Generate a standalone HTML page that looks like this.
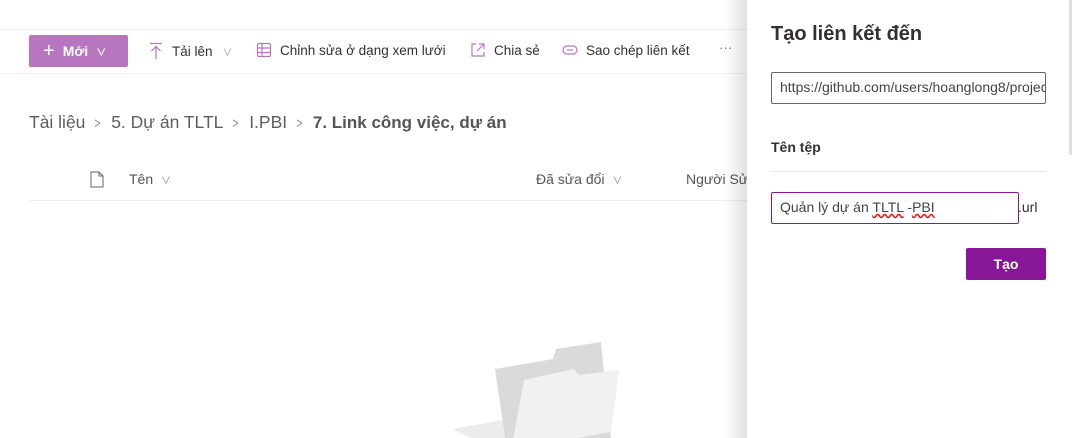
<!DOCTYPE html>
<html><head><meta charset="utf-8"><style>
*{margin:0;padding:0;box-sizing:border-box}
body{width:1075px;height:438px;overflow:hidden;background:#fff;font-family:"Segoe UI","Liberation Sans","Noto Sans CJK SC",sans-serif;color:#323130;position:relative}
.abs{position:absolute}
.tb{font-size:13.5px;color:#323130;display:flex;align-items:center;white-space:nowrap}
.ch{display:inline-block;margin:0 9px 0 8px;font-size:15px;color:#888;transform:scaleX(0.7)}
</style></head><body>
<div class="abs" style="left:0;top:29px;width:750px;height:1px;background:#eee"></div>
<div class="abs" style="left:0;top:73px;width:750px;height:1px;background:#f0f0f0"></div>
<div class="abs" style="left:29px;top:35px;width:99px;height:32px;background:#b876c1;border-radius:2px;color:#fff;font-weight:bold;font-size:14px;display:flex;align-items:center;padding-left:14px"><span style="font-size:20px;font-weight:normal;margin-right:8px;line-height:1">+</span>Mới<span style="margin-left:8px;font-size:10px">&#x2228;</span></div>
<div class="abs tb" style="left:148px;top:42px">
<svg width="16" height="18" viewBox="0 0 16 18"><path d="M2 1.5h12M8 4v13M3.5 9L8 4.5 12.5 9" fill="none" stroke="#b876c1" stroke-width="1.2"/></svg>
<span style="margin-left:8px">Tải lên</span><span style="margin-left:10px;color:#999;font-size:10px">&#x2228;</span></div>
<div class="abs tb" style="left:256px;top:42px">
<svg width="16" height="16" viewBox="0 0 16 16"><rect x="1.5" y="1.5" width="13" height="13" rx="1.5" fill="none" stroke="#b876c1" stroke-width="1.2"/><path d="M1.5 6h13M1.5 10.5h13M6 1.5v13" stroke="#b876c1" stroke-width="1.2"/></svg>
<span style="margin-left:8px">Chỉnh sửa ở dạng xem lưới</span></div>
<div class="abs tb" style="left:470px;top:42px">
<svg width="16" height="16" viewBox="0 0 16 16"><path d="M6 2H2v12h12v-4M9 2h5v5M14 2L7 9" fill="none" stroke="#b876c1" stroke-width="1.2"/></svg>
<span style="margin-left:8px">Chia sẻ</span></div>
<div class="abs tb" style="left:562px;top:42px">
<svg width="16" height="16" viewBox="0 0 16 16"><rect x="1" y="4" width="14" height="8" rx="4" fill="none" stroke="#b876c1" stroke-width="1.2"/><path d="M5 8h6" stroke="#b876c1" stroke-width="1.2"/></svg>
<span style="margin-left:8px">Sao chép liên kết</span></div>
<div class="abs tb" style="left:719px;top:40px;color:#777">···</div>
<div class="abs" style="left:29px;top:112px;font-size:17.5px;color:#605e5c;white-space:nowrap">Tài liệu<span class="ch">&gt;</span>5. Dự án TLTL<span class="ch">&gt;</span>I.PBI<span class="ch">&gt;</span><b style="color:#555;font-size:17px">7. Link công việc, dự án</b></div>
<svg class="abs" style="left:90px;top:171px" width="14" height="17" viewBox="0 0 14 17"><path d="M1 1h8l4 4v11H1z M9 1v4h4" fill="none" stroke="#666" stroke-width="1"/></svg>
<div class="abs" style="left:129px;top:171px;font-size:14px;color:#555">Tên <span style="font-size:10px;margin-left:4px;color:#888">&#x2228;</span></div>
<div class="abs" style="left:536px;top:171px;font-size:14px;color:#555">Đã sửa đổi <span style="font-size:10px;margin-left:4px;color:#888">&#x2228;</span></div>
<div class="abs" style="left:686px;top:171px;font-size:14px;color:#555;white-space:nowrap">Người Sửa</div>
<div class="abs" style="left:29px;top:200px;width:720px;height:1px;background:#eee"></div>
<svg class="abs" style="left:440px;top:330px" width="200" height="108" viewBox="440 330 200 108">
<polygon points="453,429 502,420 505,438 470,438" fill="#ececec"/>
<polygon points="495,369 553,359 556,349 601,342 604,373 611,438 505,438" fill="#dadada"/>
<polygon points="524,380 574,369 579,375 619,370 611,432 511,450" fill="#f1f1f1"/>
</svg>
<div class="abs" style="left:725px;top:0;width:22px;height:438px;background:linear-gradient(to right,rgba(0,0,0,0),rgba(0,0,0,0.12))"></div>
<div class="abs" style="left:747px;top:0;width:328px;height:438px;background:#fff">
<div class="abs" style="right:3px;top:0;width:3px;height:155px;background:#e0e0e0"></div>
<div class="abs" style="left:24px;top:23px;font-size:20px;font-weight:600;color:#323130;white-space:nowrap">Tạo liên kết đến</div>
<div class="abs" style="left:24px;top:72px;width:275px;height:32px;border:1px solid #666;border-radius:2px;font-size:14px;color:#444;padding:6px 8px;overflow:hidden;white-space:nowrap">https://github.com/users/hoanglong8/projects</div>
<div class="abs" style="left:24px;top:139px;font-size:14px;font-weight:600;color:#323130">Tên tệp</div>
<div class="abs" style="left:24px;top:171px;width:275px;height:1px;background:#e6e6e6"></div>
<div class="abs" style="left:24px;top:192px;width:248px;height:32px;border:1px solid #881798;border-radius:2px;font-size:14px;color:#444;padding:6px 8px;white-space:nowrap">Quản lý dự án <span style="text-decoration:underline wavy red">TLTL</span> -<span style="text-decoration:underline wavy red">PBI</span></div>
<div class="abs" style="left:271px;top:199px;font-size:14px;color:#323130">.url</div>
<div class="abs" style="left:219px;top:248px;width:80px;height:32px;background:#881798;border-radius:2px;color:#fff;font-size:14px;font-weight:600;display:flex;align-items:center;justify-content:center">Tạo</div>
</div>
</body></html>
